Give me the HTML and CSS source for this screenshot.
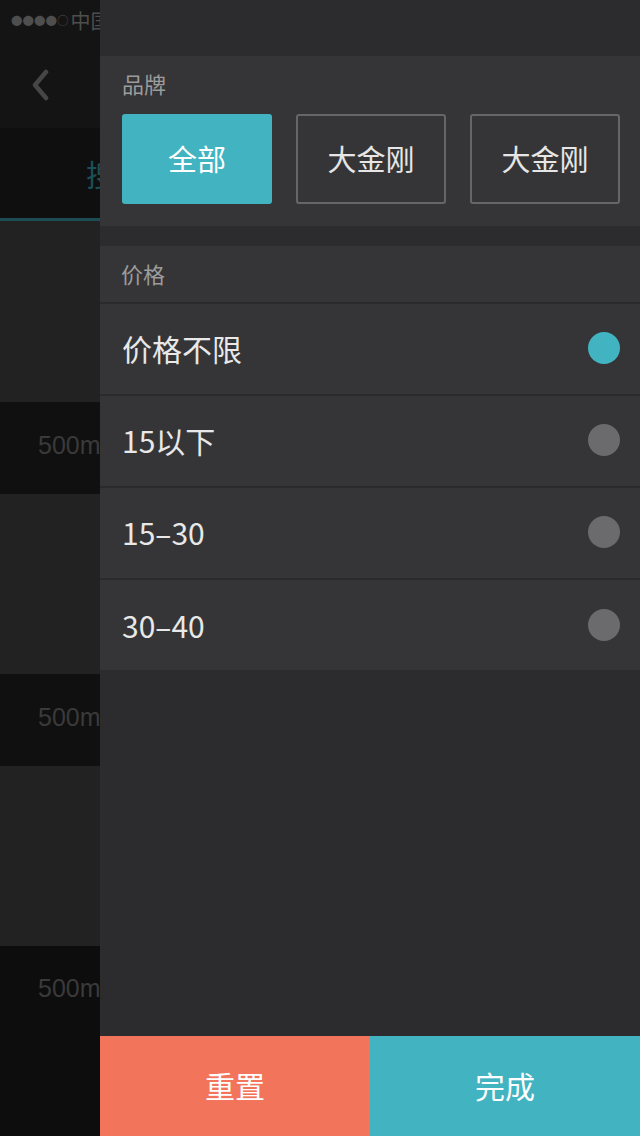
FILE: index.html
```html
<!DOCTYPE html>
<html lang="zh">
<head>
<meta charset="utf-8">
<title>筛选</title>
<link rel="stylesheet" href="styles.css">
</head>
<body>
<div class="screen">
  <div class="under">
    <div class="status"><span class="signal">●●●●○</span><span class="carrier">中国移动</span></div>
    <div class="nav">
      <svg class="back" width="20" height="32" viewBox="0 0 20 32"><path d="M15 3 L4 16 L15 29" fill="none" stroke="#464646" stroke-width="4.5" stroke-linecap="round" stroke-linejoin="round"/></svg>
    </div>
    <div class="tabs"><span class="tab">搜索</span></div>
    <div class="list">
      <div class="pic"></div>
      <div class="meta">500m</div>
      <div class="pic short"></div>
      <div class="meta">500m</div>
      <div class="pic short"></div>
      <div class="meta last">500m</div>
    </div>
  </div>
  <aside class="drawer">
    <section class="brand">
      <div class="label">品牌</div>
      <div class="chips">
        <button class="chip active">全部</button>
        <button class="chip">大金刚</button>
        <button class="chip">大金刚</button>
      </div>
    </section>
    <section class="price">
      <div class="price-head">价格</div>
      <div class="opt"><span>价格不限</span><i class="dot on"></i></div>
      <div class="opt"><span>15以下</span><i class="dot"></i></div>
      <div class="opt"><span>15–30</span><i class="dot"></i></div>
      <div class="opt"><span>30–40</span><i class="dot"></i></div>
    </section>
    <div class="spacer"></div>
    <footer class="actions">
      <button class="act reset">重置</button>
      <button class="act done">完成</button>
    </footer>
  </aside>
</div>
</body>
</html>
```

FILE: styles.css
```css
* { box-sizing: border-box; }
html, body { margin: 0; padding: 0; }
body {
  width: 640px;
  height: 1136px;
  overflow: hidden;
  background: #2c2c2e;
  font-family: "Noto Sans CJK SC", "Noto Sans", sans-serif;
}
.screen {
  display: flex;
  width: 640px;
  height: 1136px;
}
.under {
  width: 100px;
  flex: none;
  overflow: hidden;
  display: flex;
  flex-direction: column;
  background: #0d0d0d;
}
.status {
  height: 40px;
  background: #141414;
  color: #4e4e4e;
  display: flex;
  align-items: center;
  padding-left: 11px;
  white-space: nowrap;
}
.signal {
  font-size: 11.5px;
  letter-spacing: 0;
}
.carrier {
  font-size: 20px;
  margin-left: 2px;
}
.nav {
  height: 88px;
  background: #141414;
  display: flex;
  align-items: center;
  padding-left: 31px;
}
.back { display: block; margin-top: 2px; }
.tabs {
  height: 93px;
  background: #0f0f0f;
  border-bottom: 3px solid #1c4d54;
  display: flex;
  align-items: center;
  padding-left: 86px;
  white-space: nowrap;
}
.tab {
  color: #1c5058;
  font-size: 30px;
}
.list { display: flex; flex-direction: column; }
.pic { height: 181px; background: #222222; }
.pic.short { height: 180px; }
.meta {
  height: 92px;
  background: #101010;
  color: #3a3a3a;
  font-size: 25px;
  line-height: 86px;
  padding-left: 38px;
  white-space: nowrap;
  font-family: "Liberation Sans", "Noto Sans", sans-serif;
}
.meta.last { height: 190px; line-height: 84px; background: #0d0d0d; }

.drawer {
  flex: 1;
  display: flex;
  flex-direction: column;
  background: #2c2c2e;
  padding-top: 56px;
}
.brand {
  background: #353537;
  height: 170px;
  padding: 0 20px 0 22px;
}
.label {
  height: 58px;
  line-height: 54px;
  font-size: 22px;
  color: #9c9c9c;
}
.chips {
  display: grid;
  grid-template-columns: repeat(3, 150px);
  gap: 24px;
}
.chip {
  height: 90px;
  border: 2px solid #666668;
  border-radius: 3px;
  background: transparent;
  color: #e6e6e6;
  font-family: inherit;
  font-size: 29px;
  padding: 0 0 3px;
}
.chip.active {
  background: #42b3c1;
  border-color: #42b3c1;
  color: #ffffff;
}
.price {
  margin-top: 20px;
  background: #353537;
}
.price-head {
  height: 58px;
  line-height: 54px;
  padding-left: 21px;
  font-size: 22px;
  color: #9c9c9c;
  border-bottom: 2px solid #2a2a2c;
}
.opt {
  height: 92px;
  border-bottom: 2px solid #2a2a2c;
  display: flex;
  align-items: center;
  justify-content: space-between;
  padding: 0 20px 2px 22px;
  color: #e8e8e8;
  font-size: 30px;
}
.opt:last-child { height: 90px; border-bottom: 0; padding-bottom: 0; }
.dot {
  width: 32px;
  height: 32px;
  border-radius: 50%;
  background: #6b6b6d;
}
.dot.on { background: #42b3c1; }
.spacer { flex: 1; }
.actions {
  height: 100px;
  display: flex;
}
.act {
  flex: 1;
  border: 0;
  color: #ffffff;
  font-family: inherit;
  font-size: 30px;
  padding: 0 0 2px;
}
.reset { background: #f2745a; }
.done { background: #42b3c1; }
```
